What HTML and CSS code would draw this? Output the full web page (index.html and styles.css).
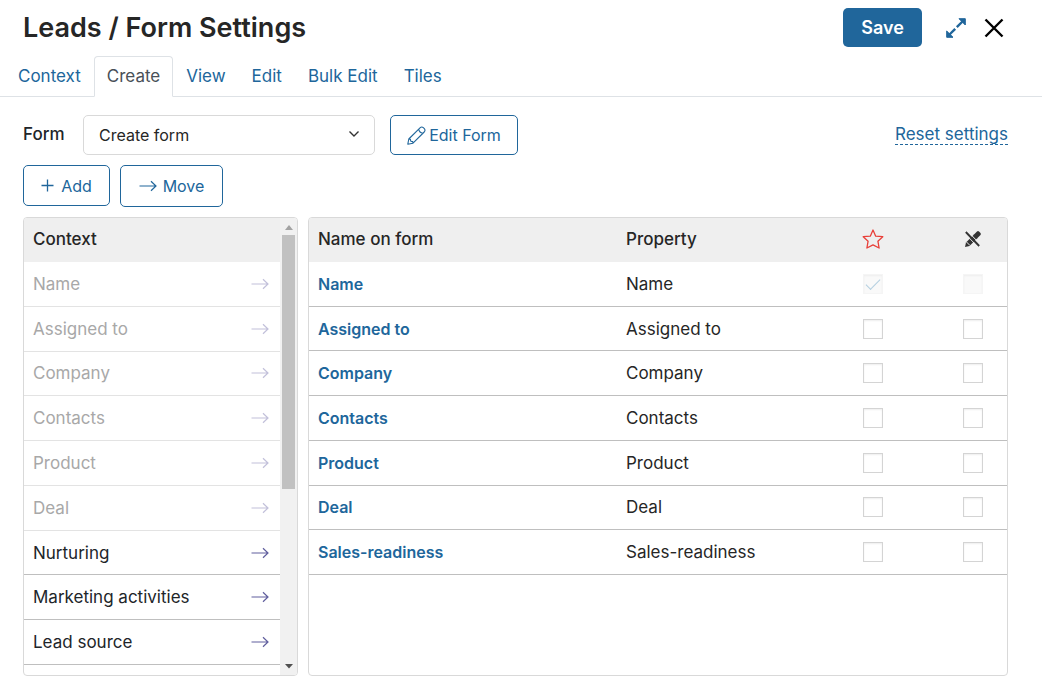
FILE: index.html
```html
<!DOCTYPE html>
<html lang="en">
<head>
<meta charset="utf-8">
<title>Leads / Form Settings</title>
<link rel="stylesheet" href="styles.css">
</head>
<body>
<svg class="sprite" aria-hidden="true">
  <symbol id="arrow" viewBox="0 0 18 12"><path d="M0.5 6H17M12 1.200L17 6L12 10.800" fill="none" stroke="currentColor" stroke-width="1.200"/></symbol>
</svg>
<header class="header">
  <h1 class="title">Leads / Form Settings</h1>
  <button class="save" type="button">Save</button>
  <button class="icon-button expand" type="button" aria-label="Expand">
    <svg width="20" height="20" viewBox="0 0 20 20"><path d="M12.800 .5H19.500V7L17.300 5.800L15 8.100L12.200 10.300L10.300 8.500L12 7L14.200 2.700ZM7.200 19.500H.5V13L2.700 14.200L5 11.900L7.800 9.700L9.700 11.500L8 13L5.800 17.300Z" fill="none"/><path d="M13 .7H19.300V7ZM7 19.300H.7V13Z" fill="currentColor" stroke="currentColor" stroke-linejoin="round"/><path d="M17 3L10.800 9.200M9.200 10.800L3 17" stroke="currentColor" stroke-width="2.400"/></svg>
  </button>
  <button class="icon-button close" type="button" aria-label="Close">
    <svg width="20" height="20" viewBox="0 0 20 20"><path d="M1.500 1.500L18.500 18.500M18.500 1.500L1.500 18.500" stroke="currentColor" stroke-width="2.400"/></svg>
  </button>
</header>
<nav class="tabs">
  <a class="tab" href="#">Context</a>
  <a class="tab active" href="#" aria-current="page">Create</a>
  <a class="tab" href="#">View</a>
  <a class="tab" href="#">Edit</a>
  <a class="tab" href="#">Bulk Edit</a>
  <a class="tab" href="#">Tiles</a>
</nav>
<main class="content">
  <div class="form-row">
    <label class="form-label" for="form">Form</label>
    <div class="select-wrap">
      <select class="select" id="form"><option>Create form</option></select>
      <svg class="chevron" width="12" height="8" viewBox="0 0 12 8"><path d="M1.500 1.500L6 6L10.500 1.500" fill="none" stroke="currentColor" stroke-width="1.400"/></svg>
    </div>
    <button class="button edit-form" type="button">
      <svg width="19" height="19" viewBox="0 0 19 19" fill="none" stroke="currentColor" stroke-width="1.100" stroke-linejoin="round"><path d="M.8 18.200L1.800 13L13 1.800Q14.700 .3 16.300 1.700L17.300 2.700Q18.700 4.300 17.200 6L6 17.200ZM1.800 13L3.400 13.300L3.800 15.200L5.700 15.600L6 17.200M11.700 3.100Q12.300 6.700 15.900 7.300"/></svg>
      Edit Form
    </button>
    <a class="reset" href="#">Reset settings</a>
  </div>
  <div class="actions">
    <button class="button add" type="button">
      <svg width="13" height="13" viewBox="0 0 13 13"><path d="M6.500 .5V12.500M.5 6.500H12.500" stroke="currentColor" stroke-width="1.300"/></svg>
      Add
    </button>
    <button class="button move" type="button">
      <svg width="18" height="12"><use href="#arrow"/></svg>
      Move
    </button>
  </div>
  <div class="panels">
    <section class="panel context">
      <div class="context-main">
        <h2 class="context-title">Context</h2>
        <ul class="fields">
          <li class="field used">Name<svg width="18" height="12"><use href="#arrow"/></svg></li>
          <li class="field used">Assigned to<svg width="18" height="12"><use href="#arrow"/></svg></li>
          <li class="field used">Company<svg width="18" height="12"><use href="#arrow"/></svg></li>
          <li class="field used">Contacts<svg width="18" height="12"><use href="#arrow"/></svg></li>
          <li class="field used">Product<svg width="18" height="12"><use href="#arrow"/></svg></li>
          <li class="field used">Deal<svg width="18" height="12"><use href="#arrow"/></svg></li>
          <li class="field">Nurturing<svg width="18" height="12"><use href="#arrow"/></svg></li>
          <li class="field">Marketing activities<svg width="18" height="12"><use href="#arrow"/></svg></li>
          <li class="field">Lead source<svg width="18" height="12"><use href="#arrow"/></svg></li>
        </ul>
      </div>
      <div class="scrollbar" aria-hidden="true">
        <svg class="scroll-up" width="8" height="5"><path d="M0 5L4 0L8 5Z" fill="currentColor"/></svg>
        <div class="thumb"></div>
        <svg class="scroll-down" width="8" height="5"><path d="M0 0H8L4 4.500Z" fill="currentColor"/></svg>
      </div>
    </section>
    <section class="panel form-panel">
      <table class="table">
        <thead>
          <tr>
            <th class="name-col">Name on form</th>
            <th>Property</th>
            <th class="required-col"><svg width="22" height="20" viewBox="0 0 22 20" role="img" aria-label="Required"><path d="M11 1L13.700 7.200L20.800 7.700L15.900 12.200L17.100 19L11 15.800L4.900 19L6.100 12.200L1.200 7.700L8.300 7.200Z" fill="none" stroke="#e8403a" stroke-width="1.300" stroke-linejoin="round"/></svg></th>
            <th class="readonly-col"><svg width="18" height="18" viewBox="0 0 18 18" role="img" aria-label="Read only"><path d="M1 17L2 12.500L10 4.500L13.500 8L5.500 16Z" fill="#333"/><path d="M9.500 5L13 1.500Q14 .7 15 1.500L16.500 3Q17.300 4 16.500 5L13 8.500Z" fill="#333"/><path d="M3.300 .9L17 15M1 3.600L14 17M2.500 12L6 15.500" stroke="#efefef" stroke-width="1"/><path d="M1.800 2L15.200 16" stroke="#333" stroke-width="1.900"/></svg></th>
          </tr>
        </thead>
        <tbody>
          <tr><td><a class="name" href="#">Name</a></td><td>Name</td><td class="center"><input class="check" type="checkbox" aria-label="Name required" checked disabled></td><td class="center"><input class="check" type="checkbox" aria-label="Name read only" disabled></td></tr>
          <tr><td><a class="name" href="#">Assigned to</a></td><td>Assigned to</td><td class="center"><input class="check" type="checkbox" aria-label="Assigned to required"></td><td class="center"><input class="check" type="checkbox" aria-label="Assigned to read only"></td></tr>
          <tr><td><a class="name" href="#">Company</a></td><td>Company</td><td class="center"><input class="check" type="checkbox" aria-label="Company required"></td><td class="center"><input class="check" type="checkbox" aria-label="Company read only"></td></tr>
          <tr><td><a class="name" href="#">Contacts</a></td><td>Contacts</td><td class="center"><input class="check" type="checkbox" aria-label="Contacts required"></td><td class="center"><input class="check" type="checkbox" aria-label="Contacts read only"></td></tr>
          <tr><td><a class="name" href="#">Product</a></td><td>Product</td><td class="center"><input class="check" type="checkbox" aria-label="Product required"></td><td class="center"><input class="check" type="checkbox" aria-label="Product read only"></td></tr>
          <tr><td><a class="name" href="#">Deal</a></td><td>Deal</td><td class="center"><input class="check" type="checkbox" aria-label="Deal required"></td><td class="center"><input class="check" type="checkbox" aria-label="Deal read only"></td></tr>
          <tr><td><a class="name" href="#">Sales-readiness</a></td><td>Sales-readiness</td><td class="center"><input class="check" type="checkbox" aria-label="Sales-readiness required"></td><td class="center"><input class="check" type="checkbox" aria-label="Sales-readiness read only"></td></tr>
        </tbody>
      </table>
    </section>
  </div>
</main>
</body>
</html>
```
FILE: styles.css
```css
* { box-sizing: border-box; }
body {
  margin: 0;
  background: #fff;
  color: #212529;
  font: 17px/24px Inter, "Liberation Sans", sans-serif;
}
button, select { font: inherit; cursor: pointer; }
svg { display: block; flex: none; }
a { color: #20669b; text-decoration: none; }
.sprite { display: none; }

.header { display: flex; align-items: center; padding: 8px 38px 0 23px; }
.title { flex: 1; margin: 0; font-size: 27px; line-height: 39px; font-weight: 600; color: #262626; }
.save { width: 79px; height: 39px; padding: 0; border: 0; border-radius: 5px; background: #20669b; color: #fff; font-size: 18px; font-weight: 600; }
.icon-button { padding: 0; border: 0; background: none; }
.expand { margin-left: 24px; color: #20669b; }
.close { margin-left: 18px; color: #000; }

.tabs { display: flex; margin-top: 9px; padding: 0 5px; border-bottom: 1px solid #dee2e6; }
.tab { height: 40px; padding: 8px 12px; border: 1px solid transparent; line-height: 22px; }
.tab.active { height: 41px; margin-bottom: -1px; border-color: #dee2e6 #dee2e6 #fff; border-radius: 4px 4px 0 0; background: #fff; color: #495057; }

.content { padding: 18px 34px 0 23px; }
.form-row { display: flex; align-items: center; }
.form-label { width: 60px; padding-bottom: 2px; font-weight: 500; }
.select-wrap { position: relative; width: 292px; }
.select { width: 100%; height: 40px; padding: 0 15px; border: 1px solid #d9d9d9; border-radius: 5px; appearance: none; background: #fff; color: #262626; font-size: 16px; }
.chevron { position: absolute; top: 15px; right: 15px; color: #333; pointer-events: none; }
.button { display: flex; align-items: center; justify-content: center; height: 41px; padding: 0; border: 1px solid #20669b; border-radius: 5px; background: #fff; color: #20669b; font-size: 16px; }
.edit-form { gap: 3px; width: 128px; height: 40px; margin-left: 15px; }
.reset { margin: 0 0 2px auto; border-bottom: 1px dashed #20669b; line-height: 20px; }
.actions { display: flex; align-items: flex-start; gap: 10px; margin-top: 10px; }
.add { gap: 7px; width: 87px; }
.move { gap: 6px; width: 103px; height: 42px; }

.panels { display: flex; gap: 10px; margin-top: 10px; }
.panel { height: 459px; border: 1px solid #d9d9d9; border-radius: 4px; overflow: hidden; }
.context { display: flex; width: 275px; }
.context-main { flex: 1; }
.context-title { height: 44px; margin: 0; padding: 9px; background: #efefef; color: #262626; font-size: 17px; line-height: 24px; font-weight: 500; }
.fields { display: grid; grid-auto-rows: 1fr; height: 403px; margin: 0; padding: 0; list-style: none; }
.field { display: flex; align-items: center; justify-content: space-between; padding: 0 11px 0 9px; border-bottom: 1px solid #bfbfbf; }
.field svg { color: #615f9e; }
.field.used { border-color: #e3e3e3; color: #a8a8a8; }
.field.used svg { color: #c2c0da; }
.scrollbar { display: flex; flex-direction: column; align-items: center; width: 17px; padding: 7px 0 6px; background: #f1f1f1; }
.scroll-up { color: #a3a3a3; }
.scroll-down { margin-top: auto; color: #505050; }
.thumb { width: 13px; height: 254px; margin-top: 5px; background: #c1c1c1; }

.form-panel { flex: 1; }
.table { width: 100%; height: 357px; border-collapse: separate; border-spacing: 0; table-layout: fixed; color: #262626; }
th { height: 44px; padding: 0 9px 2px; background: #efefef; font-weight: 500; text-align: left; }
td { padding: 0 9px; border-bottom: 1px solid #bfbfbf; }
.name-col { width: 308px; }
.required-col { width: 132px; }
.readonly-col { width: 68px; }
.required-col svg, .readonly-col svg { margin: 0 auto; }
.center { text-align: center; }
.name { font-size: 16px; font-weight: 600; }
.check { display: block; width: 20px; height: 20px; margin: 0 auto; border: 1px solid #d4d4d4; appearance: none; background: #fff; box-shadow: inset 0 1px 2px #eee; }
.check:disabled { border-color: #f5f5f5; background: #f9f9f9; }
.check:checked::before { content: ""; display: block; width: 13px; height: 6px; margin: 4px 2px; border: solid #b4cfe0; border-width: 0 0 1px 1px; transform: rotate(-45deg); }
```
